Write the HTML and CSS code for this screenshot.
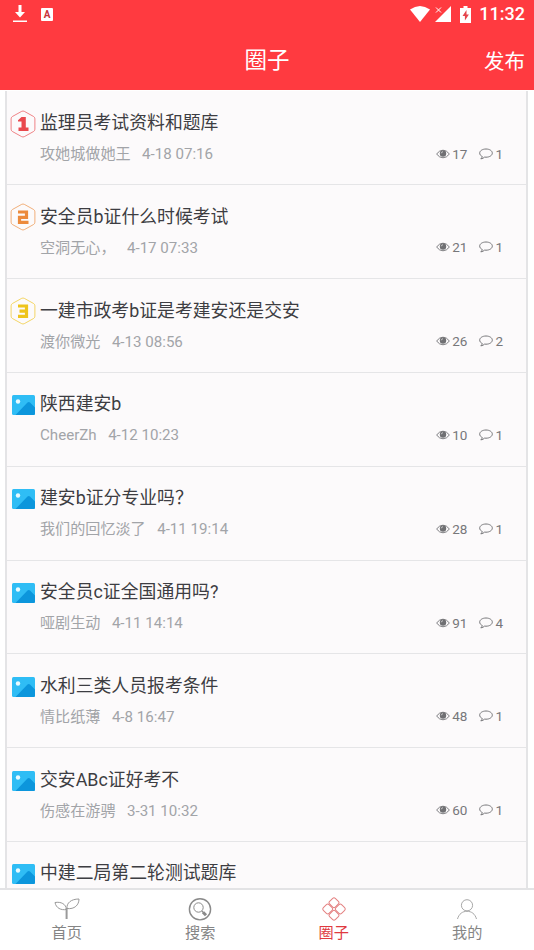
FILE: index.html
```html
<!DOCTYPE html>
<html lang="zh-CN">
<head>
<meta charset="utf-8">
<title>圈子</title>
<link rel="stylesheet" href="styles.css">
</head>
<body>
<svg class="defs" aria-hidden="true">
  <symbol id="eye" viewBox="0 0 14 10">
    <path d="M.6 5Q3.400 1.200 7 1.200T13.400 5Q10.600 8.800 7 8.800T.6 5Z" fill="none" stroke="#7d7d80" stroke-width="1"/>
    <circle cx="7" cy="4.500" r="3.200" fill="#707073"/>
    <path d="M5.300 4.300A1.800 1.800 0 0 1 7 2.700" fill="none" stroke="#ddd" stroke-width=".8"/>
  </symbol>
  <symbol id="bubble" viewBox="0 0 14 12">
    <path d="M7 1C3.400 1 .7 2.800.7 5.100c0 1.500 1 2.700 2.600 3.400-.2 1-.7 1.700-1.500 2.400 1.600-.2 2.900-.8 3.800-1.800.4.100.9.100 1.400.1 3.600 0 6.300-1.800 6.300-4.100S10.600 1 7 1Z" fill="none" stroke="#77777a" stroke-width="1"/>
  </symbol>
  <symbol id="photo" viewBox="0 0 23 20">
    <rect width="23" height="20" rx="1.500" fill="#2fbdf5"/>
    <path d="M3.500 20 15.500 7.600q1.300-1.200 2.500 0L23 12.500V18.500Q23 20 21.500 20Z" fill="#0c96dc"/>
    <circle cx="6" cy="6.500" r="2.200" fill="#e9fbff"/>
  </symbol>
  <symbol id="hex" viewBox="0 0 26 28">
    <path d="M11.600 1.400q1.400-.8 2.800 0l9 5q1.500.8 1.500 2.400v10.400q0 1.600-1.500 2.400l-9 5q-1.400.8-2.800 0l-9-5q-1.500-.8-1.500-2.400V8.800q0-1.600 1.500-2.400Z" fill="none" stroke="currentColor" stroke-width=".9" opacity=".75"/>
  </symbol>
</svg>

<header class="header">
  <div class="status">
    <svg class="s-download" viewBox="0 0 14 18"><path d="M5.500 0h3v7H12l-5 5.500L2 7h3.500ZM0 15.500h14V17H0Z" fill="#fff"/></svg>
    <span class="s-app">A</span>
    <svg class="s-wifi" viewBox="0 0 20 16"><path d="M0 3.500Q10-3.500 20 3.500L10 16Z" fill="#fff"/></svg>
    <svg class="s-signal" viewBox="0 0 16 16"><path d="M16 0v16H0Z" fill="#fff"/><path d="M0 0h8v8H0Z" fill="#ff3a40"/><path d="m1 1.500 5 5m0-5-5 5" stroke="#fff" stroke-width="1"/></svg>
    <svg class="s-battery" viewBox="0 0 11 17"><path d="M3.500 0h4v2H11v15H0V2h3.500Z" fill="#fff"/><path d="M6.500 4 2.500 10h2.400v4.500l4-6H6.500Z" fill="#e5444b"/></svg>
    <span class="clock">11:32</span>
  </div>
  <div class="titlebar">
    <h1>圈子</h1>
    <span class="publish">发布</span>
  </div>
</header>

<main class="feed">
  <div class="list">
    <article class="row">
      <svg class="badge rank1" viewBox="0 0 26 28"><use href="#hex"/><path d="M8 10.200 11.500 7h4.300v10.500h2.700V21H8.500v-3.500h3v-6H8Z" fill="currentColor"/></svg>
      <h2>监理员考试资料和题库</h2>
      <div class="meta"><span>攻她城做她王</span><time>4-18 07:16</time></div>
      <div class="stats"><svg class="eye"><use href="#eye"/></svg><b>17</b><svg class="bubble"><use href="#bubble"/></svg><b>1</b></div>
    </article>
    <article class="row">
      <svg class="badge rank2" viewBox="0 0 26 28"><use href="#hex"/><path d="M8 9h8.500v5.300H9.500v5h9" fill="none" stroke="currentColor" stroke-width="3.200"/></svg>
      <h2>安全员b证什么时候考试</h2>
      <div class="meta"><span>空洞无心，</span><time>4-17 07:33</time></div>
      <div class="stats"><svg class="eye"><use href="#eye"/></svg><b>21</b><svg class="bubble"><use href="#bubble"/></svg><b>1</b></div>
    </article>
    <article class="row">
      <svg class="badge rank3" viewBox="0 0 26 28"><use href="#hex"/><path d="M8 9h8.500v10.300H8M9.500 14.200h7" fill="none" stroke="currentColor" stroke-width="3.200"/></svg>
      <h2>一建市政考b证是考建安还是交安</h2>
      <div class="meta"><span>渡你微光</span><time>4-13 08:56</time></div>
      <div class="stats"><svg class="eye"><use href="#eye"/></svg><b>26</b><svg class="bubble"><use href="#bubble"/></svg><b>2</b></div>
    </article>
    <article class="row">
      <svg class="photo"><use href="#photo"/></svg>
      <h2>陕西建安b</h2>
      <div class="meta"><span>CheerZh</span><time>4-12 10:23</time></div>
      <div class="stats"><svg class="eye"><use href="#eye"/></svg><b>10</b><svg class="bubble"><use href="#bubble"/></svg><b>1</b></div>
    </article>
    <article class="row">
      <svg class="photo"><use href="#photo"/></svg>
      <h2>建安b证分专业吗？</h2>
      <div class="meta"><span>我们的回忆淡了</span><time>4-11 19:14</time></div>
      <div class="stats"><svg class="eye"><use href="#eye"/></svg><b>28</b><svg class="bubble"><use href="#bubble"/></svg><b>1</b></div>
    </article>
    <article class="row">
      <svg class="photo"><use href="#photo"/></svg>
      <h2>安全员c证全国通用吗?</h2>
      <div class="meta"><span>哑剧生动</span><time>4-11 14:14</time></div>
      <div class="stats"><svg class="eye"><use href="#eye"/></svg><b>91</b><svg class="bubble"><use href="#bubble"/></svg><b>4</b></div>
    </article>
    <article class="row">
      <svg class="photo"><use href="#photo"/></svg>
      <h2>水利三类人员报考条件</h2>
      <div class="meta"><span>情比纸薄</span><time>4-8 16:47</time></div>
      <div class="stats"><svg class="eye"><use href="#eye"/></svg><b>48</b><svg class="bubble"><use href="#bubble"/></svg><b>1</b></div>
    </article>
    <article class="row">
      <svg class="photo"><use href="#photo"/></svg>
      <h2>交安ABc证好考不</h2>
      <div class="meta"><span>伤感在游骋</span><time>3-31 10:32</time></div>
      <div class="stats"><svg class="eye"><use href="#eye"/></svg><b>60</b><svg class="bubble"><use href="#bubble"/></svg><b>1</b></div>
    </article>
    <article class="row">
      <svg class="photo"><use href="#photo"/></svg>
      <h2>中建二局第二轮测试题库</h2>
    </article>
  </div>
</main>

<nav class="tabs">
  <a class="tab">
    <svg viewBox="0 0 26 24" fill="none" stroke="#9a9a9a" stroke-width="1"><path d="M12.500 12.500C7 13.500 2 11 1 5.500 7 4.500 12 7 12.500 12.500ZM13 11.500C12.500 6 17 2 25 2c0 6-4.500 10.500-12 9.500Z"/><path d="M12.600 11v11" stroke-width="2"/></svg>
    <span>首页</span>
  </a>
  <a class="tab">
    <svg viewBox="0 0 26 24" fill="none" stroke="#8a8a8a"><circle cx="13" cy="12.300" r="10.600" stroke-width="1.400"/><circle cx="11.500" cy="10.500" r="4.700" stroke-width="1"/><path d="m14.800 14 1.700 1.700" stroke-width="1.200"/><path d="m16 15.200 3 3" stroke-width="3"/></svg>
    <span>搜索</span>
  </a>
  <a class="tab active">
    <svg viewBox="0 0 26 24" fill="none" stroke="#e48282" stroke-width="1"><rect x="9" y="1.700" width="8" height="8" rx="1.800" transform="rotate(45 13 5.700)"/><rect x="9" y="14.300" width="8" height="8" rx="1.800" transform="rotate(45 13 18.300)"/><rect x="2.700" y="8" width="8" height="8" rx="1.800" transform="rotate(45 6.700 12)"/><rect x="15.300" y="8" width="8" height="8" rx="1.800" transform="rotate(45 19.300 12)"/></svg>
    <span>圈子</span>
  </a>
  <a class="tab">
    <svg viewBox="0 0 26 24" fill="none" stroke="#a8a8a8" stroke-width="1"><circle cx="13" cy="8.300" r="5.600"/><path d="M3.500 22C5 16.800 8.500 14.300 13 14.300s8 2.500 9.500 7.700"/></svg>
    <span>我的</span>
  </a>
</nav>
</body>
</html>
```
FILE: styles.css
```css
* { box-sizing: border-box; margin: 0; padding: 0; }
body {
  display: flex;
  flex-direction: column;
  width: 534px;
  height: 950px;
  overflow: hidden;
  background: #fff;
  font-family: Roboto, "Noto Sans CJK SC", sans-serif;
}
svg { display: block; flex: none; }
.defs { display: none; }

.header { flex: none; height: 90px; background: #ff3a40; color: #fff; }
.status { display: flex; align-items: center; height: 28px; padding: 0 9px 0 13px; }
.s-download { width: 14px; height: 18px; }
.s-app {
  width: 12px;
  height: 13px;
  margin: 0 auto 0 14px;
  border-radius: 1px;
  background: #fff;
  color: #c8343b;
  font-size: 10px;
  font-weight: 700;
  line-height: 13px;
  text-align: center;
}
.s-wifi { width: 20px; height: 16px; margin-right: 5px; }
.s-signal { width: 16px; height: 16px; margin-right: 9px; }
.s-battery { width: 11px; height: 17px; margin-right: 8px; }
.clock { font-size: 18px; font-weight: 500; line-height: 28px; }
.titlebar {
  display: grid;
  grid-template-columns: 1fr auto 1fr;
  align-items: center;
  height: 62px;
  padding: 0 9px;
}
.titlebar h1 { grid-column: 2; padding-top: 1px; font-size: 22.5px; font-weight: 400; line-height: 62px; }
.publish { justify-self: end; font-size: 20.5px; }

.feed { flex: 1; min-height: 0; overflow: hidden; padding: 1px 6px 0 5px; }
.list { padding-top: .6px; border: solid #e4e4e6; border-width: 0 2px; background: #fcfafb; }
.row {
  display: grid;
  grid-template-columns: 33px 1fr auto;
  grid-template-rows: 30px 32px;
  align-items: center;
  height: 93.8px;
  padding: 16px 23px 0 0;
  border-bottom: 1px solid #e5e5e7;
}
.badge { width: 26px; height: 28px; margin: 2px 0 0 3px; }
.photo { width: 23px; height: 20px; margin: 3px 0 0 5px; }
.rank1 { color: #e9494e; }
.rank2 { color: #ec8a3c; }
.rank3 { color: #eec41c; }
.row h2 {
  grid-column: 2 / 4;
  padding-top: 1px;
  color: #3d3d42;
  font-size: 17.85px;
  font-weight: 400;
  line-height: 30px;
  white-space: nowrap;
}
.meta {
  grid-column: 2;
  display: flex;
  gap: 11.5px;
  padding-top: 1px;
  color: #a2a4a8;
  font-size: 15.1px;
  line-height: 32px;
}
.stats { display: flex; align-items: center; color: #77777a; }
.stats b { font-size: 13.5px; font-weight: 400; }
.eye { width: 14px; height: 10px; margin-right: 2px; }
.bubble { width: 14px; height: 12px; margin: 0 2px 0 12px; }

.tabs {
  flex: none;
  display: grid;
  grid-template-columns: repeat(4, 1fr);
  height: 62px;
  border-top: 2px solid #e3e3e5;
  background: #fff;
}
.tab {
  display: flex;
  flex-direction: column;
  align-items: center;
  padding-top: 7px;
  color: #858585;
  font-size: 15.2px;
  line-height: 24px;
}
.tab svg { width: 26px; height: 24px; }
.active { color: #e03a3f; }
```
